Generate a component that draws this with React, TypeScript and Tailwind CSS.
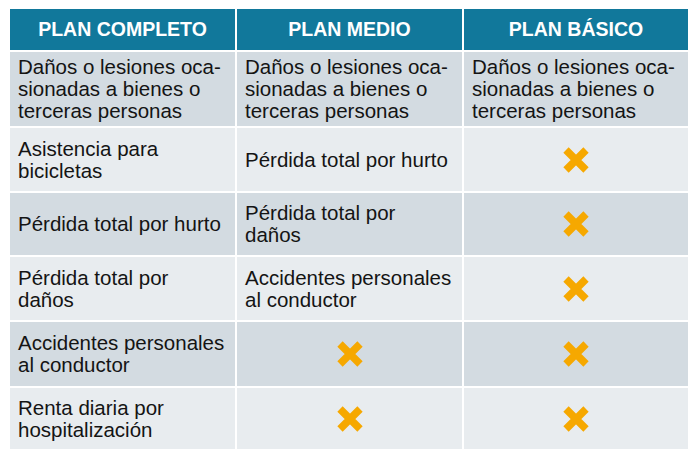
import React from "react";

type Cell = string[] | null;

const headers = ["PLAN COMPLETO", "PLAN MEDIO", "PLAN BÁSICO"];

const rows: { h: string; cells: Cell[] }[] = [
  {
    h: "h-[74px]",
    cells: [
      ["Daños o lesiones oca-", "sionadas a bienes o", "terceras personas"],
      ["Daños o lesiones oca-", "sionadas a bienes o", "terceras personas"],
      ["Daños o lesiones oca-", "sionadas a bienes o", "terceras personas"],
    ],
  },
  {
    h: "h-[63px]",
    cells: [["Asistencia para", "bicicletas"], ["Pérdida total por hurto"], null],
  },
  {
    h: "h-[62px]",
    cells: [["Pérdida total por hurto"], ["Pérdida total por", "daños"], null],
  },
  {
    h: "h-[63px]",
    cells: [["Pérdida total por", "daños"], ["Accidentes personales", "al conductor"], null],
  },
  {
    h: "h-[64px]",
    cells: [["Accidentes personales", "al conductor"], null, null],
  },
  {
    h: "h-[61px]",
    cells: [["Renta diaria por", "hospitalización"], null, null],
  },
];

function Cross() {
  return (
    <svg width="28" height="28" viewBox="0 0 28 28" aria-hidden="true">
      <path d="M4 4L24 24M24 4L4 24" stroke="#f6a800" strokeWidth="7.5" strokeLinecap="butt" />
    </svg>
  );
}

export default function App() {
  return (
    <div className="w-[700px] h-[460px] bg-white pt-[9px] pl-[10px] font-['Liberation_Sans',Arial,sans-serif]">
      <div className="grid grid-cols-[225px_225px_224px] gap-[2px] w-[678px]">
        {headers.map((t) => (
          <div
            key={t}
            className="h-[41px] bg-[#11789b] flex items-center justify-center text-white font-bold text-[19.5px] pt-[1px]"
          >
            {t}
          </div>
        ))}
        {rows.map((row, i) =>
          row.cells.map((c, j) => (
            <div
              key={`${i}-${j}`}
              className={`${row.h} ${
                i % 2 === 0 ? "bg-[#d3dbe1]" : "bg-[#e8ecef]"
              } flex items-center ${c ? "justify-start pl-[8px]" : "justify-center"}`}
            >
              {c ? (
                <div className="text-[20.5px] leading-[22px] text-[#141414] whitespace-nowrap">
                  {c.map((line, k) => (
                    <div key={k}>{line}</div>
                  ))}
                </div>
              ) : (
                <Cross />
              )}
            </div>
          ))
        )}
      </div>
    </div>
  );
}
